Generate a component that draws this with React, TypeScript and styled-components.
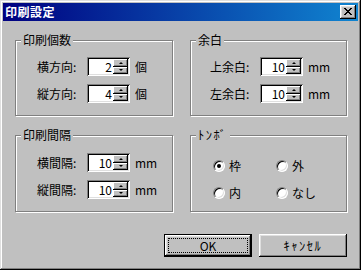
import React from "react";
import styled, { createGlobalStyle, css } from "styled-components";

const GlobalStyle = createGlobalStyle`
  html, body { margin: 0; padding: 0; background: #c0c0c0; }
  body {
    font-family: "Noto Sans CJK JP", "Liberation Sans", sans-serif;
    font-size: 12px;
    color: #000;
  }
  * { box-sizing: border-box; }
`;

const raised = css`
  box-shadow: inset -1px -1px #000, inset 1px 1px #fff, inset -2px -2px #808080,
    inset 2px 2px #dfdfdf;
`;

const Window = styled.div`
  width: 361px;
  height: 270px;
  padding: 3px;
  background: #c0c0c0;
  box-shadow: inset -1px -1px #000, inset 1px 1px #dfdfdf, inset -2px -2px #808080,
    inset 2px 2px #fff;
  display: flex;
  flex-direction: column;
`;

const TitleBar = styled.div`
  height: 18px;
  padding: 0 2px;
  display: flex;
  align-items: center;
  justify-content: space-between;
  background: linear-gradient(to right, #000080, #1084d0);
  color: #fff;
`;

const Title = styled.span`
  font-weight: bold;
  font-size: 12px;
  line-height: 14px;
  letter-spacing: 0.5px;
`;

const CloseButton = styled.div`
  width: 16px;
  height: 14px;
  background: #c0c0c0;
  ${raised};
  display: flex;
  align-items: center;
  justify-content: center;
  padding-bottom: 1px;
`;

const Body = styled.div`
  padding: 19px 0 0 12px;
  display: flex;
  flex-direction: column;
`;

const Grid = styled.div`
  display: grid;
  grid-template-columns: 158px 157px;
  grid-template-rows: 76px 77px;
  column-gap: 17px;
  row-gap: 19px;
`;

const Group = styled.div<{ $pl: number; $pt: number }>`
  position: relative;
  border: 1px solid #808080;
  box-shadow: inset 1px 1px #fff, 1px 1px #fff;
  padding: ${(p) => p.$pt}px 0 0 ${(p) => p.$pl}px;
  display: flex;
  flex-direction: column;
  gap: 8px;
`;

const Legend = styled.span`
  position: absolute;
  top: -8px;
  left: 5px;
  padding: 0 2px;
  background: #c0c0c0;
  line-height: 14px;
  font-size: 12px;
`;

const Hankaku = styled.span`
  letter-spacing: 1.5px;
  font-size: 12.5px;
`;

const Row = styled.div`
  display: flex;
  align-items: center;
  height: 19px;
`;

const Label = styled.span`
  width: 42px;
  margin-right: 8px;
  line-height: 14px;
  white-space: nowrap;
`;

const Unit = styled.span`
  margin-left: 5px;
  line-height: 14px;
`;

const SpinField = styled.div`
  width: 43px;
  height: 19px;
  padding: 2px;
  background: #fff;
  box-shadow: inset 1px 1px #808080, inset -1px -1px #fff, inset 2px 2px #000,
    inset -2px -2px #dfdfdf;
  display: flex;
`;

const SpinValue = styled.span`
  flex: 1;
  text-align: right;
  padding-right: 1px;
  line-height: 15px;
  font-size: 12px;
`;

const SpinButtons = styled.div`
  width: 15px;
  display: flex;
  flex-direction: column;
`;

const SpinButton = styled.div<{ $down?: boolean }>`
  flex: 1;
  background: #c0c0c0;
  box-shadow: inset -1px -1px #000, inset 1px 1px #fff, inset -2px -2px #808080;
  display: flex;
  align-items: center;
  justify-content: center;
  &::after {
    content: "";
    width: 0;
    height: 0;
    border-left: 2px solid transparent;
    border-right: 2px solid transparent;
    ${(p) =>
      p.$down
        ? css`border-top: 2px solid #000;`
        : css`border-bottom: 2px solid #000;`}
  }
`;

const RadioGrid = styled.div`
  display: grid;
  grid-template-columns: 63px auto;
  row-gap: 15px;
`;

const RadioItem = styled.div`
  display: flex;
  align-items: center;
  gap: 4px;
  height: 12px;
`;

const RadioCircle = styled.span<{ $checked?: boolean }>`
  position: relative;
  width: 12px;
  height: 12px;
  border-radius: 50%;
  background: #fff;
  border: 1px solid;
  border-color: #808080 #fff #fff #808080;
  box-shadow: inset 1px 1px #000, inset -1px -1px #dfdfdf;
  display: flex;
  align-items: center;
  justify-content: center;
  &::after {
    content: "";
    width: 4px;
    height: 4px;
    border-radius: 50%;
    background: ${(p) => (p.$checked ? "#000" : "transparent")};
  }
`;

const RadioLabel = styled.span`
  line-height: 14px;
`;

const ButtonRow = styled.div`
  width: 332px;
  margin-top: 22px;
  display: flex;
  justify-content: flex-end;
  gap: 7px;
`;

const Button = styled.div<{ $default?: boolean }>`
  width: 88px;
  height: 23px;
  padding: 3px;
  background: #c0c0c0;
  border: ${(p) => (p.$default ? "1px solid #000" : "none")};
  ${raised};
  display: flex;
`;

const ButtonFace = styled.span<{ $focused?: boolean }>`
  flex: 1;
  border: 1px dotted ${(p) => (p.$focused ? "#000" : "transparent")};
  display: flex;
  align-items: center;
  justify-content: center;
  line-height: 14px;
  font-size: 12px;
`;

const CloseIcon = () => (
  <svg width="8" height="7" viewBox="0 0 8 7" shapeRendering="crispEdges">
    <path
      d="M0 0h2v1H0zM6 0h2v1H6zM1 1h2v1H1zM5 1h2v1H5zM2 2h4v1H2zM3 3h2v1H3zM2 4h4v1H2zM1 5h2v1H1zM5 5h2v1H5zM0 6h2v1H0zM6 6h2v1H6z"
      fill="#000"
    />
  </svg>
);

const Spin = ({ value }: { value: string }) => (
  <SpinField>
    <SpinValue>{value}</SpinValue>
    <SpinButtons>
      <SpinButton />
      <SpinButton $down />
    </SpinButtons>
  </SpinField>
);

const SpinRow = ({ label, value, unit }: { label: string; value: string; unit: string }) => (
  <Row>
    <Label>{label}</Label>
    <Spin value={value} />
    <Unit>{unit}</Unit>
  </Row>
);

const Radio = ({ label, checked }: { label: string; checked?: boolean }) => (
  <RadioItem>
    <RadioCircle $checked={checked} />
    <RadioLabel>{label}</RadioLabel>
  </RadioItem>
);

export default function App() {
  return (
    <>
      <GlobalStyle />
      <Window>
        <TitleBar>
          <Title>印刷設定</Title>
          <CloseButton>
            <CloseIcon />
          </CloseButton>
        </TitleBar>
        <Body>
          <Grid>
            <Group $pl={21} $pt={16}>
              <Legend>印刷個数</Legend>
              <SpinRow label="横方向:" value="2" unit="個" />
              <SpinRow label="縦方向:" value="4" unit="個" />
            </Group>
            <Group $pl={19} $pt={16}>
              <Legend>余白</Legend>
              <SpinRow label="上余白:" value="10" unit="mm" />
              <SpinRow label="左余白:" value="10" unit="mm" />
            </Group>
            <Group $pl={21} $pt={17}>
              <Legend>印刷間隔</Legend>
              <SpinRow label="横間隔:" value="10" unit="mm" />
              <SpinRow label="縦間隔:" value="10" unit="mm" />
            </Group>
            <Group $pl={22} $pt={24}>
              <Legend>
                <Hankaku>ﾄﾝﾎﾞ</Hankaku>
              </Legend>
              <RadioGrid>
                <Radio label="枠" checked />
                <Radio label="外" />
                <Radio label="内" />
                <Radio label="なし" />
              </RadioGrid>
            </Group>
          </Grid>
          <ButtonRow>
            <Button $default>
              <ButtonFace $focused>OK</ButtonFace>
            </Button>
            <Button>
              <ButtonFace>
                <Hankaku>ｷｬﾝｾﾙ</Hankaku>
              </ButtonFace>
            </Button>
          </ButtonRow>
        </Body>
      </Window>
    </>
  );
}
